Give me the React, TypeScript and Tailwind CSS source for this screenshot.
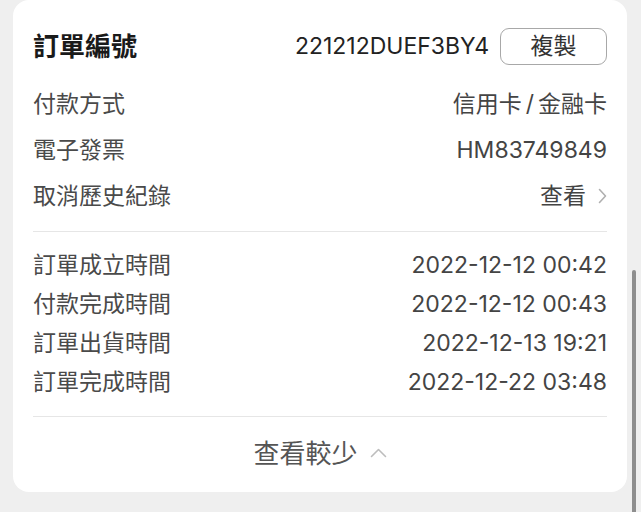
import React from 'react';

const font = { fontFamily: 'Inter, "Noto Sans CJK TC", sans-serif' };

const timeRows = [
    { label: '訂單成立時間', value: '2022-12-12 00:42' },
    { label: '付款完成時間', value: '2022-12-12 00:43' },
    { label: '訂單出貨時間', value: '2022-12-13 19:21' },
    { label: '訂單完成時間', value: '2022-12-22 03:48' },
];

const ChevronRight = () => (
    <svg width="9" height="16" viewBox="0 0 9 16" fill="none">
        <path d="M1.5 1.5L7.5 8L1.5 14.5" stroke="#b0b0b0" strokeWidth="1.6" strokeLinecap="round" strokeLinejoin="round" />
    </svg>
);

const ChevronUp = () => (
    <svg width="17" height="10" viewBox="0 0 17 10" fill="none">
        <path d="M1.5 8.5L8.5 1.5L15.5 8.5" stroke="#bdbdbd" strokeWidth="1.6" strokeLinecap="round" strokeLinejoin="round" />
    </svg>
);

const App = () => {
    return (
        <div className="relative min-h-[512px] overflow-hidden bg-[#efefef] pl-[13px] pr-[14px]" style={font}>
            <div className="rounded-[16px] bg-white px-5 pt-[26px] pb-[3px]">
                {/* order number */}
                <div className="flex h-10 items-center justify-between">
                    <h2 className="text-[26px] font-bold text-[#1a1a1a]">訂單編號</h2>
                    <div className="flex items-center gap-[11px]">
                        <span className="text-[23px] text-[#222]">221212DUEF3BY4</span>
                        <button className="flex h-[37px] w-[107px] items-center justify-center rounded-[9px] border border-[#a8a8a8] text-[23px] text-[#333]">
                            複製
                        </button>
                    </div>
                </div>

                <div className="mt-[15px]">
                    <div className="flex h-[46px] items-center justify-between text-[23px]">
                        <span className="text-[#4a4a4a]">付款方式</span>
                        <span className="text-[#444]">
                            信用卡<span className="px-[4px]">/</span>金融卡
                        </span>
                    </div>
                    <div className="flex h-[46px] items-center justify-between text-[23px]">
                        <span className="text-[#4a4a4a]">電子發票</span>
                        <span className="text-[#444]">HM83749849</span>
                    </div>
                    <div className="flex h-[46px] items-center justify-between text-[23px]">
                        <span className="text-[#4a4a4a]">取消歷史紀錄</span>
                        <span className="flex items-center gap-[12px] text-[#444]">
                            查看 <ChevronRight />
                        </span>
                    </div>
                </div>

                <div className="mt-3 h-px bg-[#e6e6e6]" />

                <div className="mt-[14px]">
                    {timeRows.map((row) => (
                        <div key={row.label} className="flex h-[39px] items-center justify-between text-[23px]">
                            <span className="text-[#4a4a4a]">{row.label}</span>
                            <span className="text-[#444]">{row.value}</span>
                        </div>
                    ))}
                </div>

                <div className="mt-[14px] h-px bg-[#e6e6e6]" />

                {/* collapse */}
                <div className="flex h-[72px] items-center justify-center gap-[12px]">
                    <span className="text-[26px] text-[#555]">查看較少</span>
                    <ChevronUp />
                </div>
            </div>

            {/* scrollbar thumb */}
            <div className="absolute right-[5px] top-[270px] h-[260px] w-[4px] rounded-full bg-[#8e8e8e]" />
        </div>
    );
};

export default App;
